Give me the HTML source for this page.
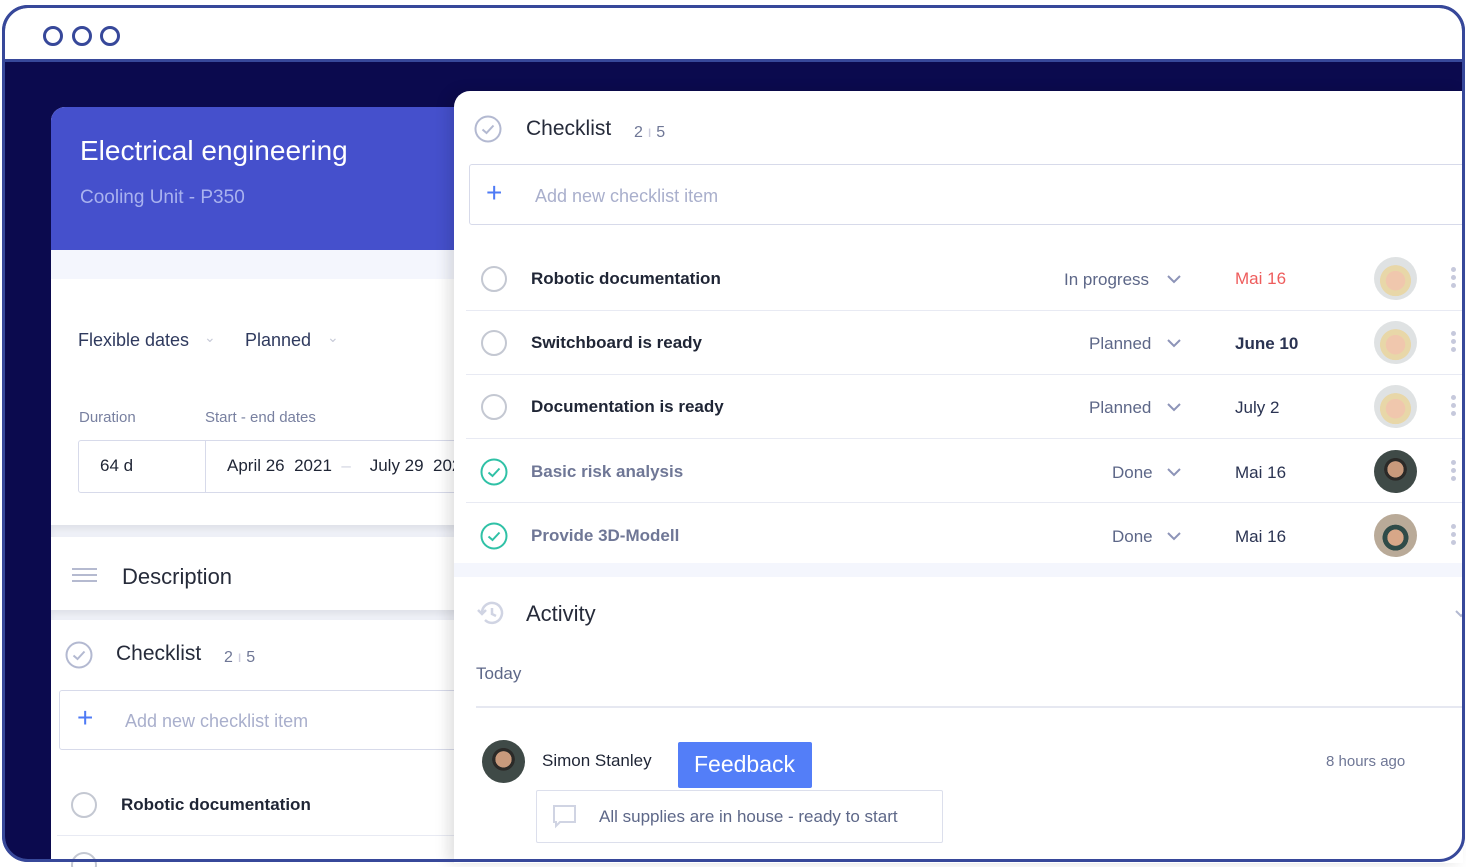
<!DOCTYPE html>
<html><head><meta charset="utf-8"><style>
*{box-sizing:border-box;margin:0;padding:0}
body{width:1466px;height:863px;background:#fff;font-family:"Liberation Sans","DejaVu Sans",sans-serif;position:relative;overflow:hidden}
.abs{position:absolute}
.frame{left:2px;top:5px;width:1463px;height:857px;border:3px solid #37489a;border-radius:26px;overflow:hidden;background:#0b0a4e}
.title{left:0;top:0;width:100%;height:54px;background:#fff;border-bottom:3px solid #37489a}
.dot{width:20px;height:20px;border:3.5px solid #37489a;border-radius:50%;top:18px}
.t{position:absolute;white-space:nowrap}
.hl{position:absolute;height:1px;background:#e8eaf3}
.circ{position:absolute;width:26px;height:26px;border:2px solid #c4c8d2;border-radius:50%}
.av{position:absolute;width:43px;height:43px;border-radius:50%;overflow:hidden}
.kebab{position:absolute;width:5px}
.kebab i{display:block;width:5px;height:5px;border-radius:50%;background:#c6c9dc;margin-bottom:3px}
</style></head><body>
<div class="abs frame">
 <div class="abs title"></div>
 <div class="abs dot" style="left:38px"></div>
 <div class="abs dot" style="left:67px"></div>
 <div class="abs dot" style="left:95px"></div>
</div>

<!-- left panel -->
<div class="abs" style="left:51px;top:107px;width:410px;height:760px;background:#fff;border-radius:14px 0 0 0;overflow:hidden">
 <div class="abs" style="left:0;top:0;width:100%;height:143px;background:#4550cc"></div>
 <div class="t" style="left:29px;top:28px;font-size:28px;color:#fff">Electrical engineering</div>
 <div class="t" style="left:29px;top:80px;font-size:19px;color:#a9b2ef">Cooling Unit - P350</div>
 <div class="abs" style="left:0;top:143px;width:100%;height:29px;background:#f4f6fd"></div>
 <div class="t" style="left:27px;top:223px;font-size:18px;color:#2f3a5e">Flexible dates</div>
 <div class="t" style="left:153px;top:222px;font-size:14px;color:#c7cad8">⌄</div>
 <div class="t" style="left:194px;top:223px;font-size:18px;color:#2f3a5e">Planned</div>
 <div class="t" style="left:276px;top:222px;font-size:14px;color:#c7cad8">⌄</div>
 <div class="t" style="left:28px;top:302px;font-size:15px;color:#7880a0">Duration</div>
 <div class="t" style="left:154px;top:302px;font-size:15px;color:#7880a0">Start - end dates</div>
 <div class="abs" style="left:27px;top:333px;width:400px;height:53px;border:1px solid #d7daea;border-radius:3px"></div>
 <div class="abs" style="left:154px;top:333px;width:1px;height:53px;background:#d7daea"></div>
 <div class="t" style="left:49px;top:349px;font-size:17px;color:#1f2535">64 d</div>
 <div class="t" style="left:176px;top:349px;font-size:17px;color:#1f2535">April 26&nbsp; 2021 <span style="color:#d0d3e0">&nbsp;–&nbsp;</span>&nbsp;&nbsp; July 29&nbsp; 2021</div>
 <div class="abs" style="left:0;top:418px;width:100%;height:12px;background:#eef0f7;box-shadow:inset 0 4px 6px rgba(0,0,0,.06)"></div>
 <div class="abs" style="left:21px;top:461px;width:25px;height:2px;background:#b5bad0;box-shadow:0 6px 0 #b5bad0,0 12px 0 #b5bad0"></div>
 <div class="t" style="left:71px;top:457px;font-size:22px;color:#262b3a">Description</div>
 <div class="abs" style="left:0;top:503px;width:100%;height:10px;background:#eef0f7;box-shadow:inset 0 4px 6px rgba(0,0,0,.06)"></div>
 <svg class="abs" style="left:14px;top:534px" width="28" height="28"><circle cx="14" cy="14" r="12.5" fill="none" stroke="#b3b9d1" stroke-width="2"/><path d="M8.5 14.5l4 3.5 7-7.5" fill="none" stroke="#b3b9d1" stroke-width="2"/></svg>
 <div class="t" style="left:65px;top:535px;font-size:21px;color:#262b3a">Checklist</div>
 <div class="t" style="left:173px;top:542px;font-size:16px;color:#6f7796">2 <span style="color:#ccd">ı</span> 5</div>
 <div class="abs" style="left:8px;top:583px;width:420px;height:60px;border:1px solid #d7daea;border-radius:3px"></div>
 <div class="t" style="left:26px;top:595px;font-size:28px;color:#4e7af5;font-weight:300">+</div>
 <div class="t" style="left:74px;top:604px;font-size:18px;color:#a9afcc">Add new checklist item</div>
 <div class="circ" style="left:20px;top:685px"></div>
 <div class="t" style="left:70px;top:688px;font-size:17px;font-weight:bold;color:#1f2535">Robotic documentation</div>
 <div class="hl" style="left:6px;top:728px;width:410px"></div>
 <div class="circ" style="left:20px;top:745px"></div>
</div>

<!-- right panel -->
<div class="abs" style="left:454px;top:91px;width:1009px;height:772px;background:#fff;border-radius:16px 0 0 0;box-shadow:-6px 0 14px rgba(0,0,0,.12);overflow:hidden">
 <svg class="abs" style="left:20px;top:24px" width="28" height="28"><circle cx="14" cy="14" r="12.5" fill="none" stroke="#b3b9d1" stroke-width="2"/><path d="M8.5 14.5l4 3.5 7-7.5" fill="none" stroke="#b3b9d1" stroke-width="2"/></svg>
 <div class="t" style="left:72px;top:26px;font-size:21px;color:#262b3a">Checklist</div>
 <div class="t" style="left:180px;top:33px;font-size:16px;color:#6f7796">2 <span style="color:#ccd">ı</span> 5</div>
 <div class="abs" style="left:15px;top:73px;width:1010px;height:61px;border:1px solid #d7daea;border-radius:3px"></div>
 <div class="t" style="left:32px;top:86px;font-size:28px;color:#4e7af5;font-weight:300">+</div>
 <div class="t" style="left:81px;top:95px;font-size:18px;color:#a9afcc">Add new checklist item</div>

 <div class="circ" style="left:27px;top:175px"></div>
 <div class="t" style="left:77px;top:178px;font-size:17px;font-weight:bold;color:#1f2535">Robotic documentation</div>
 <div class="t" style="left:610px;top:179px;font-size:17px;color:#5d6788">In progress</div>
 <div class="t" style="left:781px;top:178px;font-size:17px;color:#ee5c5c">Mai 16</div>
 <div class="hl" style="left:12px;top:219px;width:1000px"></div>

 <div class="circ" style="left:27px;top:239px"></div>
 <div class="t" style="left:77px;top:242px;font-size:17px;font-weight:bold;color:#1f2535">Switchboard is ready</div>
 <div class="t" style="left:635px;top:243px;font-size:17px;color:#5d6788">Planned</div>
 <div class="t" style="left:781px;top:243px;font-size:17px;color:#2a3352;font-weight:bold">June 10</div>
 <div class="hl" style="left:12px;top:283px;width:1000px"></div>

 <div class="circ" style="left:27px;top:303px"></div>
 <div class="t" style="left:77px;top:306px;font-size:17px;font-weight:bold;color:#1f2535">Documentation is ready</div>
 <div class="t" style="left:635px;top:307px;font-size:17px;color:#5d6788">Planned</div>
 <div class="t" style="left:781px;top:307px;font-size:17px;color:#2a3352">July 2</div>
 <div class="hl" style="left:12px;top:347px;width:1000px"></div>

 <svg class="abs" style="left:26px;top:367px" width="28" height="28"><circle cx="14" cy="14" r="12.5" fill="none" stroke="#2fc1a6" stroke-width="2"/><path d="M8.5 14.5l4 3.5 7-7.5" fill="none" stroke="#2fc1a6" stroke-width="2"/></svg>
 <div class="t" style="left:77px;top:371px;font-size:17px;font-weight:bold;color:#6f7796">Basic risk analysis</div>
 <div class="t" style="left:658px;top:372px;font-size:17px;color:#5d6788">Done</div>
 <div class="t" style="left:781px;top:372px;font-size:17px;color:#2a3352">Mai 16</div>
 <div class="hl" style="left:12px;top:411px;width:1000px"></div>

 <svg class="abs" style="left:26px;top:431px" width="28" height="28"><circle cx="14" cy="14" r="12.5" fill="none" stroke="#2fc1a6" stroke-width="2"/><path d="M8.5 14.5l4 3.5 7-7.5" fill="none" stroke="#2fc1a6" stroke-width="2"/></svg>
 <div class="t" style="left:77px;top:435px;font-size:17px;font-weight:bold;color:#6f7796">Provide 3D-Modell</div>
 <div class="t" style="left:658px;top:436px;font-size:17px;color:#5d6788">Done</div>
 <div class="t" style="left:781px;top:436px;font-size:17px;color:#2a3352">Mai 16</div>

 <svg class="abs" style="left:713px;top:182px" width="14" height="300" fill="none" stroke="#8d94b8" stroke-width="2"><path d="M1 3l6 6 6-6M1 67l6 6 6-6M1 131l6 6 6-6M1 196l6 6 6-6M1 260l6 6 6-6"/></svg>

 <div class="av" style="left:920px;top:166px;background:radial-gradient(circle at 50% 55%,#f0c7ad 0 30%,#e8d7a8 31% 48%,#dfe2e3 49%)"></div>
 <div class="av" style="left:920px;top:230px;background:radial-gradient(circle at 50% 55%,#f0c7ad 0 30%,#e8d7a8 31% 48%,#dfe2e3 49%)"></div>
 <div class="av" style="left:920px;top:294px;background:radial-gradient(circle at 50% 55%,#f0c7ad 0 30%,#e8d7a8 31% 48%,#dfe2e3 49%)"></div>
 <div class="av" style="left:920px;top:359px;background:radial-gradient(circle at 50% 45%,#c99a7c 0 25%,#2b2a28 26% 35%,#3f4a47 36%)"></div>
 <div class="av" style="left:920px;top:423px;background:radial-gradient(circle at 50% 55%,#d7a788 0 25%,#2f4b48 26% 40%,#b9aa98 41%)"></div>

 <div class="kebab" style="left:997px;top:176px"><i></i><i></i><i></i></div>
 <div class="kebab" style="left:997px;top:240px"><i></i><i></i><i></i></div>
 <div class="kebab" style="left:997px;top:304px"><i></i><i></i><i></i></div>
 <div class="kebab" style="left:997px;top:369px"><i></i><i></i><i></i></div>
 <div class="kebab" style="left:997px;top:433px"><i></i><i></i><i></i></div>

 <div class="abs" style="left:0;top:472px;width:100%;height:14px;background:#f4f6fd"></div>

 <svg class="abs" style="left:22px;top:508px" width="30" height="28" fill="none" stroke="#d0d4e3" stroke-width="2.5"><path d="M6 14a10 10 0 1 1 3 7"/><path d="M2 11l4 4 4-4"/><path d="M16 9v6l4 2"/></svg>
 <div class="t" style="left:72px;top:510px;font-size:22px;color:#262b3a">Activity</div>
 <svg class="abs" style="left:1001px;top:518px" width="10" height="10" fill="none" stroke="#b3b9d1" stroke-width="2"><path d="M1 2l5 5 5-5"/></svg>
 <div class="t" style="left:22px;top:573px;font-size:17px;color:#5d6788">Today</div>
 <div class="hl" style="left:22px;top:615px;width:990px;height:2px;background:#e6e8f1"></div>
 <div class="av" style="left:28px;top:649px;background:radial-gradient(circle at 50% 45%,#c99a7c 0 25%,#2b2a28 26% 35%,#3f4a47 36%)"></div>
 <div class="t" style="left:88px;top:660px;font-size:17px;color:#1f2535">Simon Stanley</div>
 <div class="abs" style="left:224px;top:651px;width:134px;height:46px;background:#537ef8;border-radius:2px"></div>
 <div class="t" style="left:240px;top:660px;font-size:23px;color:#fff">Feedback</div>
 <div class="t" style="left:872px;top:662px;font-size:15px;color:#6f7796">8 hours ago</div>
 <div class="abs" style="left:82px;top:699px;width:407px;height:53px;border:1.5px solid #dcdfec;border-radius:2px"></div>
 <svg class="abs" style="left:99px;top:714px" width="24" height="24" fill="none" stroke="#d0d4e3" stroke-width="2"><path d="M1 1h21v16H7l-4 4v-4H1z"/></svg>
 <div class="t" style="left:145px;top:716px;font-size:17px;color:#5d6788">All supplies are in house - ready to start</div>
</div>
<div class="abs" style="left:2px;top:5px;width:1463px;height:857px;border:3px solid #37489a;border-radius:26px;pointer-events:none"></div>
</body></html>
